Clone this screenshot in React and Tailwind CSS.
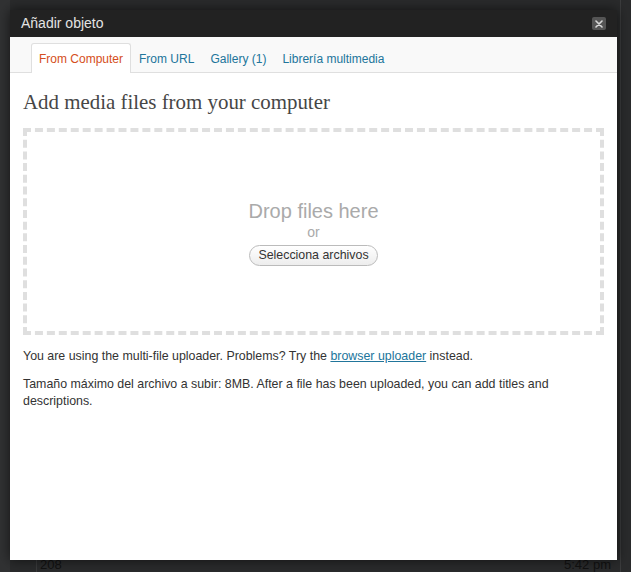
import React from 'react';

const tabs = [
  { label: 'From Computer', active: true },
  { label: 'From URL' },
  { label: 'Gallery (1)' },
  { label: 'Librería multimedia' },
];

// Dimmed admin page that sits behind the thickbox overlay
const Backdrop = () => (
  <div className="absolute inset-0 bg-[#2a2b2c]">
    <div className="absolute left-0 top-0 h-full w-[10px] bg-[#313233]" />
    <div className="absolute left-[36px] top-[556px] h-[16px] w-px bg-[#3a3b3c]" />
    <div className="absolute left-[40px] top-[557px] text-[13px] leading-[16px] text-[#121212]">208</div>
    <div className="absolute left-[564px] top-[557px] text-[13px] leading-[16px] text-[#121212]">5:42 pm</div>
    <div className="absolute left-[620px] top-[0px] h-full w-px bg-[#3b3c3d]" />
  </div>
);

const CloseButton = () => (
  <button className="flex h-[13px] w-[14px] items-center justify-center rounded-[2px] bg-[#555555]">
    <svg width="8" height="8" viewBox="0 0 8 8">
      <path d="M1 1 L7 7 M7 1 L1 7" stroke="#d8d8d8" strokeWidth="1.6" strokeLinecap="round" />
    </svg>
  </button>
);

export default function App() {
  return (
    <div className="relative h-[572px] w-full overflow-hidden font-['Liberation_Sans',Arial,sans-serif]">
      <Backdrop />

      <div className="absolute left-[10px] top-[10px] flex h-[550px] w-[607px] flex-col bg-white shadow-[0_0_12px_rgba(0,0,0,0.6)]">
        {/* title bar */}
        <div className="flex h-[27px] items-center justify-between bg-[#222222] pl-[11px] pr-[11px]">
          <span className="text-[14px] text-[#e4e4e4]">Añadir objeto</span>
          <CloseButton />
        </div>

        {/* tabs */}
        <div className="flex h-[36px] items-end border-b border-[#dfdfdf] bg-[#f9f9f9] pl-[21px]">
          {tabs.map((t) => (
            <div
              key={t.label}
              className={
                t.active
                  ? '-mb-px flex h-[30px] items-center rounded-t-[3px] border border-b-0 border-[#dfdfdf] bg-white px-[7px] text-[12px] text-[#d54e21]'
                  : '-mb-px flex h-[30px] items-center border border-b-0 border-transparent px-[7px] text-[12px] text-[#21759b]'
              }
            >
              {t.label}
            </div>
          ))}
        </div>

        {/* content */}
        <div className="px-[13px] pt-[16px]">
          <h3 className="font-['Liberation_Serif',Georgia,serif] text-[20.9px] leading-[26px] text-[#464646]">
            Add media files from your computer
          </h3>

          <div className="mt-[13px] flex h-[207px] flex-col items-center justify-center border-4 border-dashed border-[#dfdfdf] pt-[2px]">
            <div className="text-[20px] leading-[22px] text-[#aaaaaa]">Drop files here</div>
            <div className="mt-[1px] text-[14px] leading-[18px] text-[#aaaaaa]">or</div>
            <button className="mt-[4px] h-[21px] rounded-full border border-[#bbbbbb] bg-gradient-to-b from-white to-[#ededed] px-[8px] text-[12.4px] text-[#333333]">
              Selecciona archivos
            </button>
          </div>

          <p className="mt-[13px] text-[12.4px] leading-[17px] text-[#333333]">
            You are using the multi-file uploader. Problems? Try the{' '}
            <a className="text-[#21759b] underline">browser uploader</a> instead.
          </p>
          <p className="mt-[11px] text-[12.4px] leading-[17px] text-[#333333]">
            Tamaño máximo del archivo a subir: 8MB. After a file has been uploaded, you can add titles and descriptions.
          </p>
        </div>
      </div>
    </div>
  );
}
